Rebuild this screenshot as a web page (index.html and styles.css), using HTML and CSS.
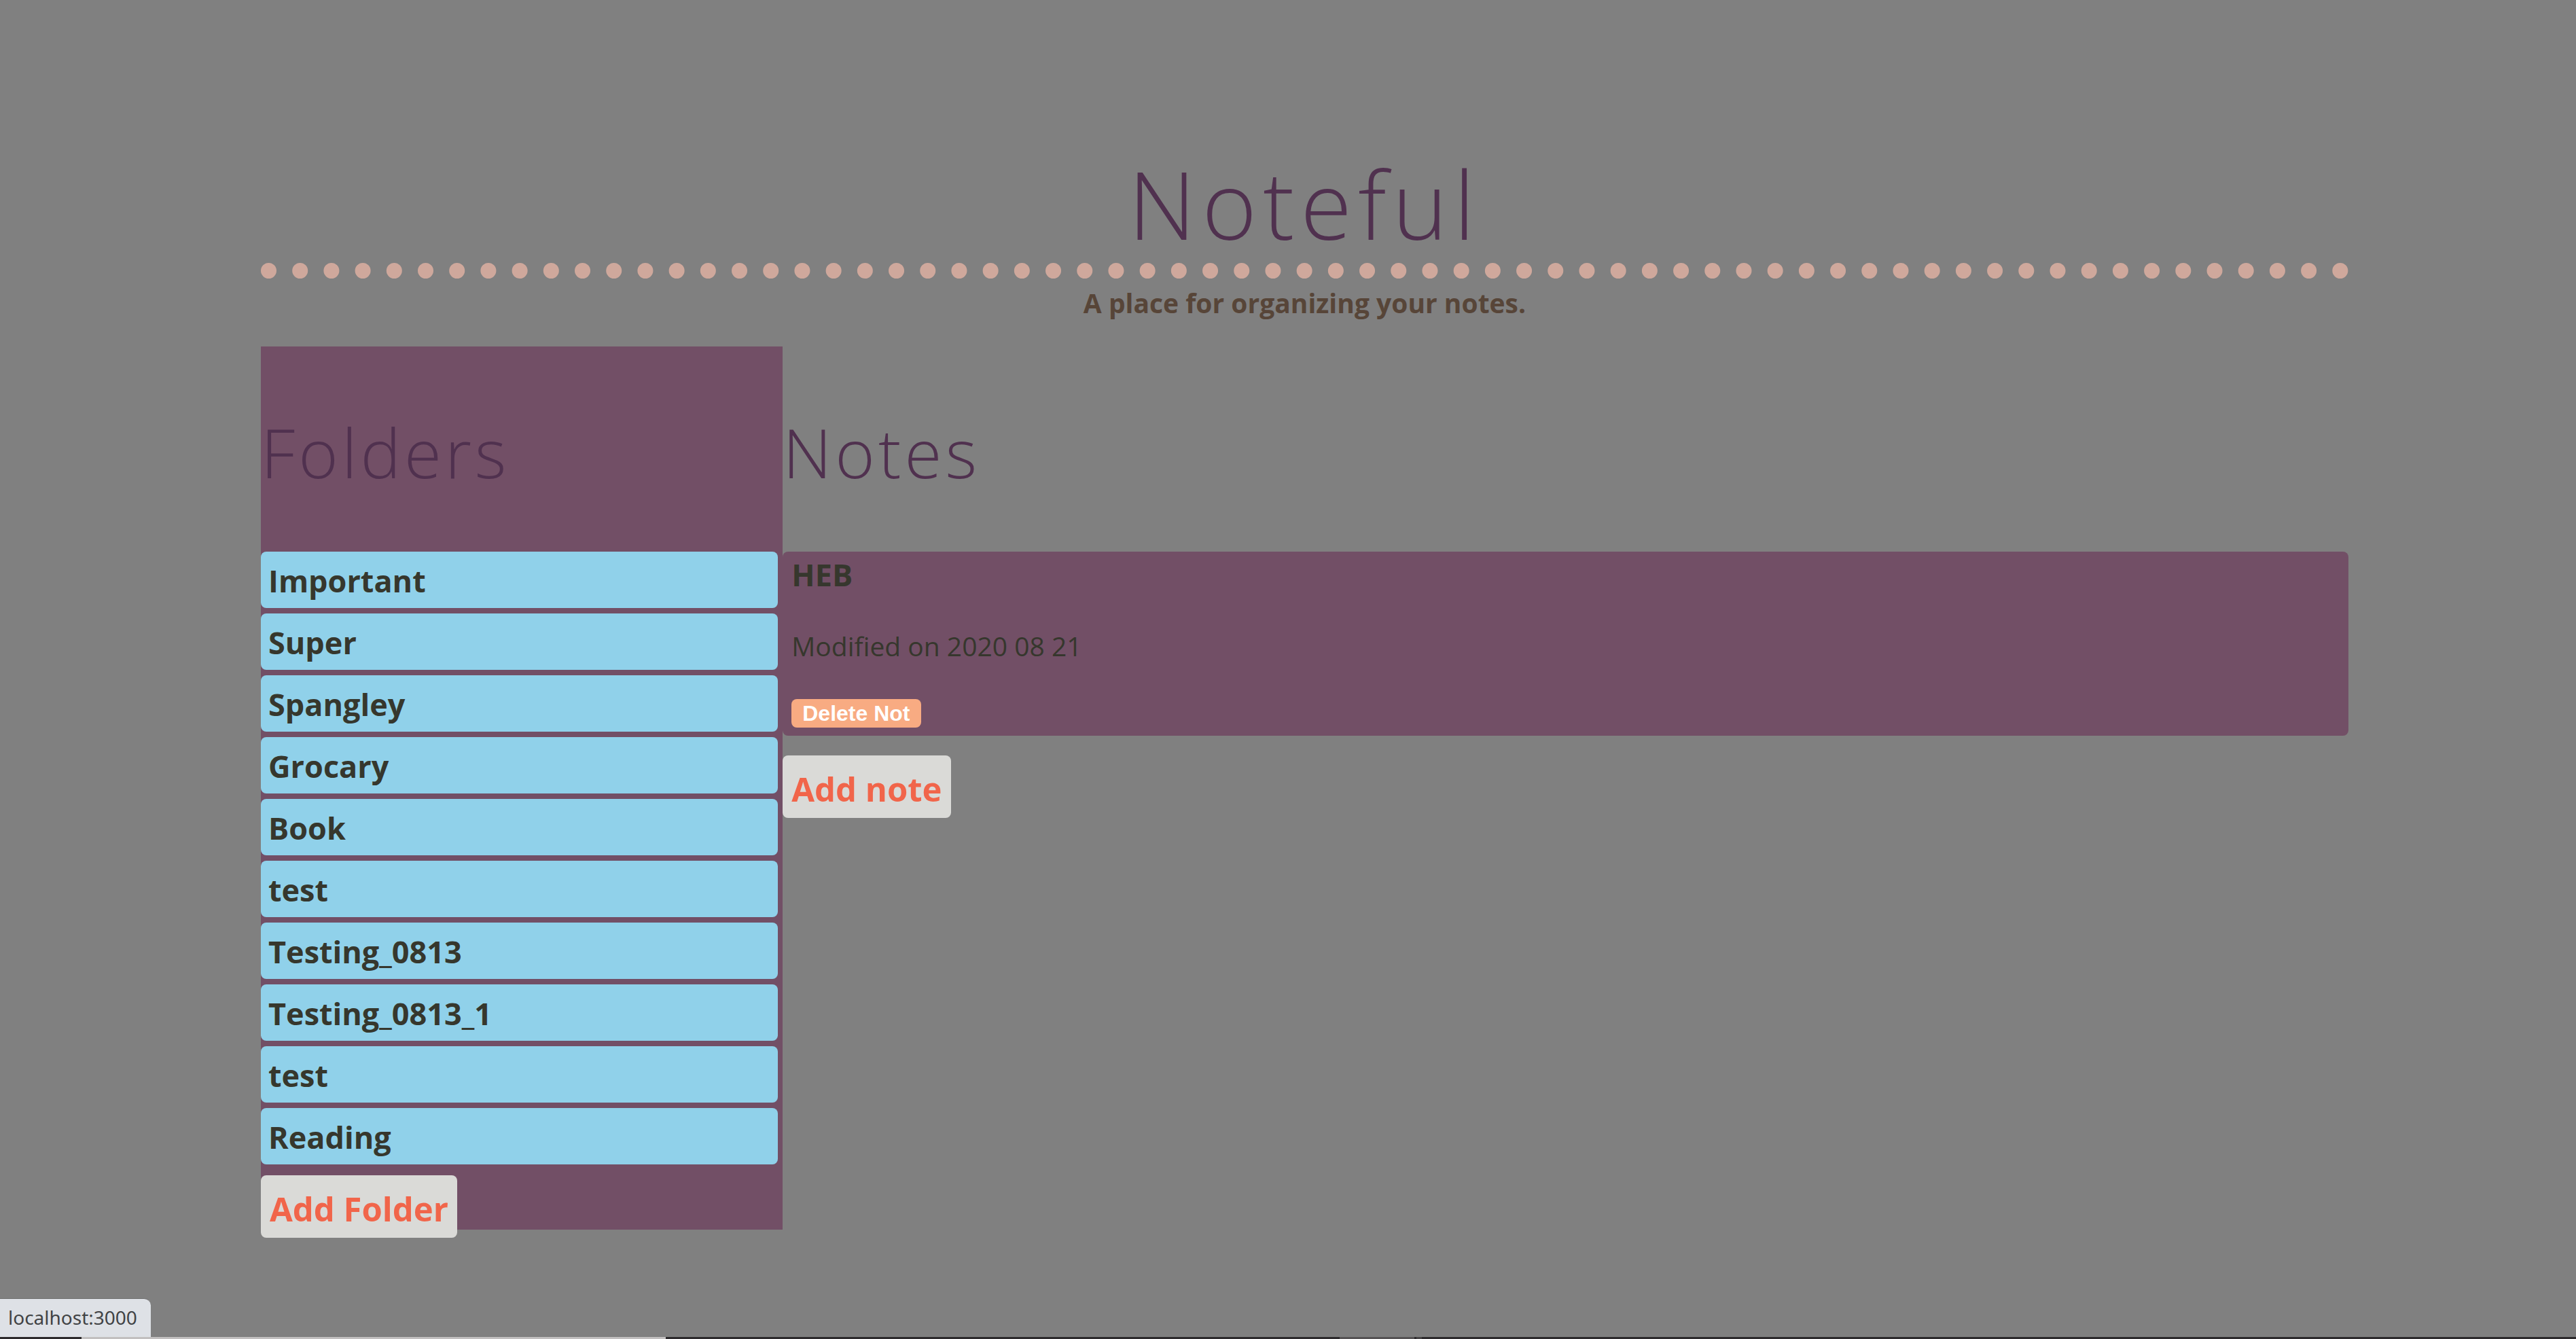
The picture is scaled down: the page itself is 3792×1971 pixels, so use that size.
FILE: index.html
```html
<!DOCTYPE html>
<html lang="en">
<head>
<meta charset="utf-8">
<title>Noteful</title>
<link rel="stylesheet" href="styles.css">
</head>
<body>
<div class="app">
  <header class="header">
    <h1 class="title"><a href="#">Noteful</a></h1>
    <p class="tagline">A place for organizing your notes.</p>
  </header>
  <div class="columns">
    <nav class="sidebar">
      <h2 class="heading">Folders</h2>
      <ul class="folders">
        <li><a class="folder" href="#">Important</a></li>
        <li><a class="folder" href="#">Super</a></li>
        <li><a class="folder" href="#">Spangley</a></li>
        <li><a class="folder" href="#">Grocary</a></li>
        <li><a class="folder" href="#">Book</a></li>
        <li><a class="folder" href="#">test</a></li>
        <li><a class="folder" href="#">Testing_0813</a></li>
        <li><a class="folder" href="#">Testing_0813_1</a></li>
        <li><a class="folder" href="#">test</a></li>
        <li><a class="folder" href="#">Reading</a></li>
      </ul>
      <a class="add add-folder" href="#">Add Folder</a>
    </nav>
    <main class="notes">
      <h2 class="heading">Notes</h2>
      <article class="note">
        <h3 class="note-name"><a href="#">HEB</a></h3>
        <p class="note-date">Modified on 2020 08 21</p>
        <button class="delete" type="button">Delete Not</button>
      </article>
      <a class="add" href="#">Add note</a>
    </main>
  </div>
</div>
<footer class="bottom">
  <div class="status">localhost:3000</div>
  <div class="strip"><span class="strip-light"></span><span class="strip-mid"></span><span class="strip-end"></span></div>
</footer>
</body>
</html>
```
FILE: styles.css
```css
* {
  box-sizing: border-box;
}

body {
  margin: 0;
  min-height: 100vh;
  background: #808080;
  color: #36372d;
  font-family: "Open Sans", "Noto Sans", sans-serif;
  font-size: 39px;
}

h1, h2, h3, p, ul {
  margin: 0;
  padding: 0;
}

ul {
  list-style: none;
}

a {
  color: inherit;
  text-decoration: none;
}

.app {
  padding: 212px 335px 148px 384px;
}

.header {
  text-align: center;
}

.title {
  border-bottom: 23px dotted #cfa89c;
  color: #50314f;
  font-size: 138px;
  font-weight: 300;
  line-height: 175px;
  letter-spacing: 9px;
}

.tagline {
  padding-top: 6px;
  color: #574538;
  font-weight: 700;
  line-height: 60px;
}

.columns {
  display: grid;
  grid-template-columns: 1fr 3fr;
  align-items: start;
  padding-top: 34px;
}

.sidebar {
  background: #724f66;
  padding-bottom: 4px;
}

.heading {
  padding: 90px 0 82px;
  color: #50314f;
  font-size: 100px;
  font-weight: 300;
  line-height: 130px;
  letter-spacing: 5px;
}

.folders {
  display: grid;
  gap: 8px;
  margin-right: 7px;
}

.folder {
  display: block;
  padding: 11px 11px 8px;
  border-radius: 8px;
  background: #90d1ea;
  font-size: 45px;
  font-weight: 700;
  line-height: 64px;
}

.note {
  padding: 2px 13px 12px;
  border-radius: 8px;
  background: #724f66;
}

.note-name {
  font-size: 45px;
  font-weight: 700;
  line-height: 64px;
}

.note-date {
  padding: 39px 0 44px;
  line-height: 68px;
}

.delete {
  display: block;
  padding: 0 16px;
  border: 0;
  border-radius: 8px;
  background: #f8ab82;
  color: #fff;
  font: 700 32px/42px "Liberation Sans", Arial, sans-serif;
}

.add {
  display: block;
  width: fit-content;
  margin-top: 29px;
  padding: 15px 13px 9px;
  border-radius: 8px;
  background: #dadad7;
  color: #f1654a;
  font-size: 49px;
  font-weight: 700;
  line-height: 68px;
}

.add-folder {
  margin-top: 16px;
  margin-bottom: -16px;
}

.bottom {
  position: fixed;
  inset: auto 0 0 0;
}

.status {
  width: fit-content;
  padding: 6px 20px 8px 12px;
  border-top: 1px solid #6e6e6e;
  border-top-right-radius: 10px;
  background: #dee1e6;
  color: #414345;
  font-family: "Noto Sans", "Open Sans", sans-serif;
  font-size: 28px;
  line-height: 42px;
}

.strip {
  display: flex;
  height: 3px;
  padding-left: 120px;
  background: #2c2a2c;
}

.strip-light {
  width: 860px;
  background: #c1bfbf;
}

.strip-mid {
  width: 110px;
  margin-left: 992px;
  background: #555354;
}

.strip-end {
  width: 8px;
  margin-left: 3px;
  background: #454344;
}
```
